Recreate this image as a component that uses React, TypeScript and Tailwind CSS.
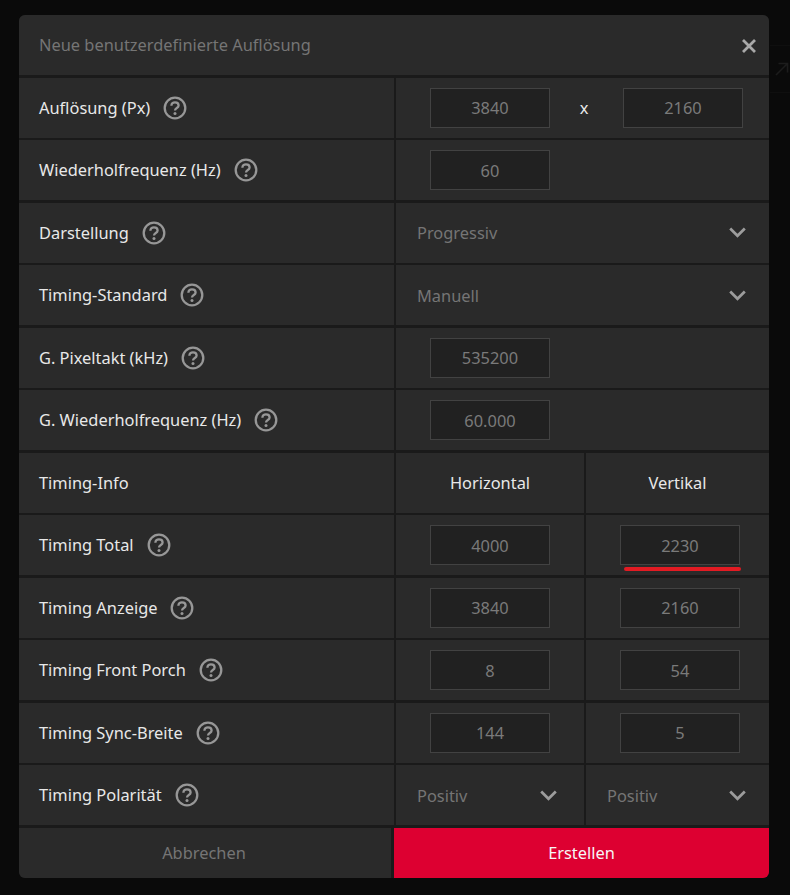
const input = "flex h-10 w-[120px] shrink-0 items-center justify-center border border-[#424242] bg-[#212121] pt-px text-[#7a7a7a]";

function Help() {
  return (
    <svg width="24" height="24" viewBox="0 0 24 24" fill="none" className="ml-[13px] shrink-0">
      <circle cx="12" cy="12" r="10.3" stroke="#979797" strokeWidth="2.3" />
      <path d="M8.4 9.7c0-2.1 1.6-3.4 3.6-3.4s3.6 1.2 3.6 3.1c0 2.7-3.6 2.5-3.6 5.1" stroke="#979797" strokeWidth="2.3" />
      <circle cx="12" cy="17.6" r="1.5" fill="#979797" />
    </svg>
  );
}

function Chevron() {
  return (
    <svg width="17" height="11" viewBox="0 0 17 11" fill="none" className="shrink-0">
      <path d="M1.2 1.5 8.5 8.8l7.3-7.3" stroke="#9c9c9c" strokeWidth="2.7" />
    </svg>
  );
}

function Label({ text, help = true }: { text: string; help?: boolean }) {
  return (
    <div className="flex w-[375px] shrink-0 items-center bg-[#2a2a2a] pl-5 text-[#e8e8e8]">
      <span>{text}</span>
      {help && <Help />}
    </div>
  );
}

function Row({ children, label, help }: { children: React.ReactNode; label: string; help?: boolean }) {
  return (
    <div className="flex h-[60px] gap-[2px]">
      <Label text={label} help={help} />
      {children}
    </div>
  );
}

function Single({ value }: { value: string }) {
  return (
    <div className="flex flex-1 items-center bg-[#2a2a2a] pl-[34px]">
      <div className={input}>{value}</div>
    </div>
  );
}

function Select({ value, narrow }: { value: string; narrow?: boolean }) {
  return (
    <div className={narrow ? "flex flex-1 items-center justify-between bg-[#2a2a2a] pl-[21px] pr-[27px] text-[#757575]" : "flex flex-1 items-center justify-between bg-[#2a2a2a] pl-[21px] pr-[23px] text-[#757575]"}>
      <span className="pt-px">{value}</span>
      <Chevron />
    </div>
  );
}

function Pair({ a, b }: { a: string; b: string }) {
  return (
    <div className="flex flex-1 gap-[2px]">
      <div className="flex w-[188px] items-center bg-[#2a2a2a] pl-[34px]">
        <div className={input}>{a}</div>
      </div>
      <div className="flex flex-1 items-center bg-[#2a2a2a] pl-[34px]">
        <div className={input}>{b}</div>
      </div>
    </div>
  );
}

export default function App() {
  return (
    <div className="relative h-[895px] w-[790px] overflow-hidden bg-[#0a0a0a] pl-[19px] pt-[15px] font-['Noto_Sans','Open_Sans',sans-serif] text-[16.4px]">
      <div className="absolute left-[770px] top-[45px] h-[48px] w-5 border-y border-[#0f0f0f]" />
      <svg width="14" height="14" viewBox="0 0 14 14" fill="none" className="absolute left-[775px] top-[62px]">
        <path d="M1 13 12.5 1.5M3.5 1.5h9v9" stroke="#1c1c1c" strokeWidth="1.6" />
      </svg>
      <div className="relative flex w-[750px] flex-col gap-[2.5px] overflow-hidden rounded-md bg-[#1a1a1a]">
        <div className="mb-[0.4px] flex h-[60px] items-center justify-between bg-[#2a2a2a] pl-5 pr-3 text-[#757575]">
          <span>Neue benutzerdefinierte Auflösung</span>
          <svg width="16" height="16" viewBox="0 0 16 16" fill="none" className="mt-px">
            <path d="M2 2l12 12M14 2 2 14" stroke="#a8a8a8" strokeWidth="2.8" />
          </svg>
        </div>

        <Row label="Auflösung (Px)">
          <div className="flex flex-1 items-center bg-[#2a2a2a] pl-[34px]">
            <div className={input}>3840</div>
            <span className="w-[73px] pr-[5px] pt-px text-center text-[#e8e8e8]">x</span>
            <div className={input}>2160</div>
          </div>
        </Row>
        <Row label="Wiederholfrequenz (Hz)"><Single value="60" /></Row>
        <Row label="Darstellung"><Select value="Progressiv" /></Row>
        <Row label="Timing-Standard"><Select value="Manuell" /></Row>
        <Row label="G. Pixeltakt (kHz)"><Single value="535200" /></Row>
        <Row label="G. Wiederholfrequenz (Hz)"><Single value="60.000" /></Row>
        <Row label="Timing-Info" help={false}>
          <div className="flex flex-1 gap-[2px] text-[#e8e8e8]">
            <div className="flex w-[188px] items-center justify-center bg-[#2a2a2a]">Horizontal</div>
            <div className="flex flex-1 items-center justify-center bg-[#2a2a2a]">Vertikal</div>
          </div>
        </Row>
        <Row label="Timing Total"><Pair a="4000" b="2230" /></Row>
        <Row label="Timing Anzeige"><Pair a="3840" b="2160" /></Row>
        <Row label="Timing Front Porch"><Pair a="8" b="54" /></Row>
        <Row label="Timing Sync-Breite"><Pair a="144" b="5" /></Row>
        <Row label="Timing Polarität">
          <div className="flex flex-1 gap-[2px]">
            <div className="flex w-[188px]"><Select value="Positiv" narrow /></div>
            <div className="flex flex-1"><Select value="Positiv" /></div>
          </div>
        </Row>

        <div className="flex h-[50px]">
          <div className="flex w-[372px] items-center justify-center bg-[#2a2a2a] pr-[2px] text-[#757575]">Abbrechen</div>
          <div className="ml-[3px] flex flex-1 items-center justify-center bg-[#dd0031] text-[#f6f6f6]">Erstellen</div>
        </div>

        <div className="absolute left-[605px] top-[552px] h-1 w-[117px] rounded-full bg-[#e21b23]" />
      </div>
    </div>
  );
}
